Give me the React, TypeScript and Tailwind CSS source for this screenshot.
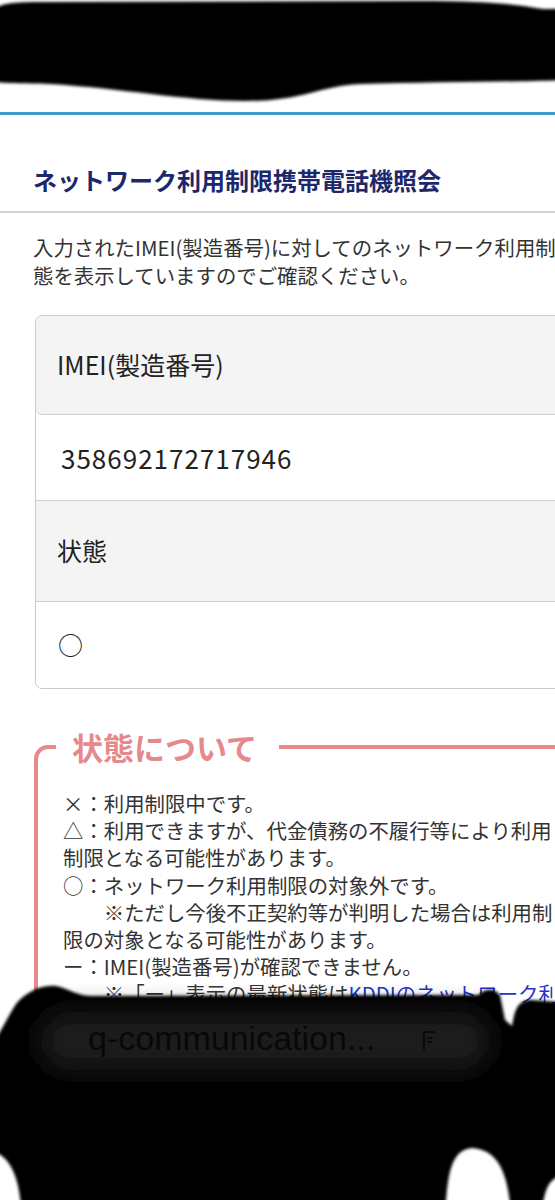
import React from "react";

function TopBlob() {
  return (
    <svg
      className="absolute left-0 top-[-20px]"
      width="555"
      height="140"
      viewBox="0 -20 555 140"
    >
      <defs>
        <filter id="bt" x="-10%" y="-20%" width="120%" height="140%">
          <feGaussianBlur stdDeviation="1.6" />
        </filter>
      </defs>
      <path
        d="M-10,14 C-4,4 8,2 40,2 L420,1 C470,1 505,3 530,7 C540,9 548,10 565,8 L565,80 C520,82 430,82 360,84 C318,86 305,101 245,101 C185,101 120,88 50,84 C15,83 0,84 -10,80 Z"
        fill="#000"
        filter="url(#bt)"
      />
    </svg>
  );
}

function BottomBlob() {
  return (
    <>
      <svg
        className="absolute left-0 top-[970px]"
        width="555"
        height="260"
        viewBox="0 970 555 260"
      >
        <defs>
          <filter id="bb" x="-10%" y="-10%" width="120%" height="120%">
            <feGaussianBlur stdDeviation="1.8" />
          </filter>
          <filter id="bg" x="-20%" y="-60%" width="140%" height="220%">
            <feGaussianBlur stdDeviation="13" />
          </filter>
        </defs>
        <path
          d="M16,1004 C24,994 40,984 56,986 C68,988 76,996 92,996 L478,995 C486,988 494,988 500,995 L505,1020 L512,1026 C515,1006 520,1000 532,1000 L560,1002 L560,1176 C548,1180 543,1190 540,1230 L512,1230 C510,1175 500,1150 472,1148 C452,1150 446,1170 445,1230 L22,1230 C22,1185 14,1160 -5,1152 L-5,1040 C2,1030 8,1016 16,1004 Z"
          fill="#000"
          filter="url(#bb)"
        />
        <rect x="40" y="1012" width="450" height="58" rx="26" fill="#1c1c1c" filter="url(#bg)" />
        <rect x="170" y="1178" width="186" height="8" rx="4" fill="#000" />
      </svg>
      <div className="absolute left-[88px] top-[1021px] text-[34px] leading-none text-[#080808] font-['Liberation_Sans',sans-serif] whitespace-nowrap">
        q-communication...
      </div>
      <svg className="absolute left-[421px] top-[1030px]" width="24" height="22" viewBox="0 0 24 22">
        <path d="M3,2 L3,20 M3,2 L14,2 M6,8 L11,8 M6,12 L11,12" stroke="#0a0a0a" strokeWidth="2" fill="none" />
      </svg>
    </>
  );
}

export default function App() {
  return (
    <div className="relative w-[555px] h-[1200px] overflow-hidden bg-white font-['Noto_Sans_CJK_JP',sans-serif] text-[#222]">
      <div className="w-[640px]">
        <div className="h-[112px]" />
        <div className="h-[3px] bg-[#3d9bc6]" />
        <div className="pt-[47px] pb-[13px] pl-[33px] border-b-2 border-[#d2d2d2]">
          <h1 className="text-[24px] leading-[36px] font-bold text-[#1d286c] whitespace-nowrap">
            ネットワーク利用制限携帯電話機照会
          </h1>
        </div>

        <p className="mt-[20px] ml-[33px] w-[578px] text-[20.4px] leading-[28px] text-[#333]">
          入力されたIMEI(製造番号)に対してのネットワーク利用制限状態を表示していますのでご確認ください。
        </p>

        <div className="mt-[26px] ml-[35px] w-[600px] border border-[#c9c9c9] rounded-[7px] overflow-hidden text-[25px] text-[#222]">
          <div className="h-[99px] bg-[#f4f4f4] flex items-center px-[21px] border-b border-[#cfcfcf] rounded-b-[6px]">
            IMEI(製造番号)
          </div>
          <div className="h-[86px] flex items-center px-[25px] border-b border-[#cfcfcf] text-[26px] tracking-[1px]">
            358692172717946
          </div>
          <div className="h-[101px] bg-[#f4f4f4] flex items-center px-[21px] border-b border-[#cfcfcf]">
            状態
          </div>
          <div className="h-[86px] flex items-center px-[22px]">○</div>
        </div>

        <fieldset className="mt-[38px] ml-[34px] w-[600px] border-t-4 border-l-4 border-[#e68a8c] rounded-tl-[14px] pl-[25px] pt-[23px] pb-[40px]">
          <legend className="ml-[-7px] pl-[16px] pr-[22px] text-[31px] leading-[40px] font-bold text-[#e5898c]">
            状態について
          </legend>
          <div className="w-[500px] text-[20.4px] leading-[27.2px] text-[#333]">
            <p>×：利用制限中です。</p>
            <p>△：利用できますが、代金債務の不履行等により利用制限となる可能性があります。</p>
            <p>○：ネットワーク利用制限の対象外です。</p>
            <p>{"　　※ただし今後不正契約等が判明した場合は利用制限の対象となる可能性があります。"}</p>
            <p>ー：IMEI(製造番号)が確認できません。</p>
            <p>
              {"　　※「ー」表示の最新状態は"}
              <span className="text-[#2433c9]">KDDIのネットワーク利用制限携帯電話機照会</span>
              {"でご確認ください。"}
            </p>
          </div>
        </fieldset>
      </div>

      <TopBlob />
      <BottomBlob />
    </div>
  );
}
